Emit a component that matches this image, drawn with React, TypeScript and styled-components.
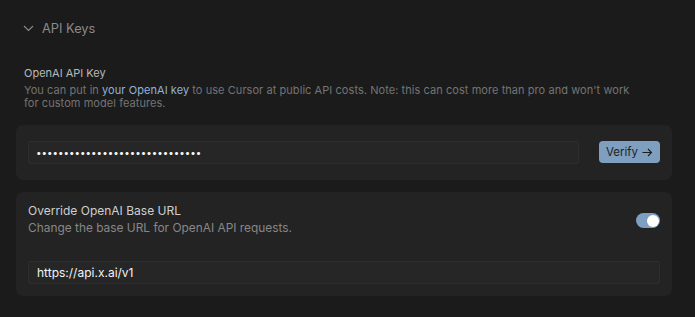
import * as React from 'react';
import styled, {createGlobalStyle} from 'styled-components';

const GlobalStyle = createGlobalStyle`
  html, body {
    margin: 0;
    padding: 0;
    background: #1b1b1b;
  }
  body {
    font-family: Inter, "Noto Sans", sans-serif;
    -webkit-font-smoothing: antialiased;
  }
`;

const Page = styled.main`
  width: 695px;
  height: 317px;
  box-sizing: border-box;
  padding: 20px 23px 0 16px;
  display: flex;
  flex-direction: column;
`;

const SectionHeader = styled.div`
  display: flex;
  align-items: center;
  gap: 8px;
  padding-left: 7px;
  height: 17px;
  color: #8a8a8a;
  font-size: 12.8px;
`;

const Intro = styled.div`
  margin-top: 29px;
  padding: 0 8px;
  display: flex;
  flex-direction: column;
`;

const Label = styled.div`
  color: #b9b9b9;
  font-size: 11px;
  line-height: 14px;
`;

const Hint = styled.p`
  margin: 3.5px 0 0;
  color: #747474;
  font-size: 11px;
  letter-spacing: 0.06px;
  line-height: 13px;
  max-width: 612px;

  & a {
    color: #8fb3da;
    text-decoration: none;
  }
`;

const Card = styled.section<{$mt: number; $pad: string}>`
  margin-top: ${p => p.$mt}px;
  background: #232323;
  border-radius: 7px;
  padding: ${p => p.$pad};
  display: flex;
  flex-direction: column;
`;

const Row = styled.div`
  display: flex;
  align-items: flex-start;
  gap: 20px;
`;

const Field = styled.input`
  flex: 1;
  height: 23px;
  box-sizing: border-box;
  margin: 0;
  padding: 0 8px;
  background: #262626;
  border: 1px solid #2d2d2d;
  border-radius: 2px;
  color: #f4f4f4;
  font-family: Inter, "Noto Sans", sans-serif;
  font-size: 12px;
  outline: none;
`;

const KeyField = styled(Field)`
  font-size: 9.8px;
  padding: 0 7px;
`;

const VerifyButton = styled.button`
  height: 22px;
  width: 61px;
  border: none;
  border-radius: 4px;
  background: #7e9fc0;
  color: #1e1e1e;
  font-family: Inter, "Noto Sans", sans-serif;
  font-size: 11.5px;
  display: flex;
  align-items: center;
  justify-content: center;
  gap: 4px;
  padding: 0;
`;

const SettingHead = styled.div`
  display: flex;
  justify-content: space-between;
  align-items: flex-start;
`;

const Title = styled.div`
  color: #cfcfcf;
  font-size: 12px;
  line-height: 16px;
`;

const Sub = styled.div`
  color: #878787;
  font-size: 11.9px;
  line-height: 16px;
  margin-top: 1px;
`;

const Toggle = styled.div<{$on: boolean}>`
  width: 24px;
  height: 15px;
  margin-top: 10px;
  border-radius: 8px;
  background: ${p => (p.$on ? '#7e9fc0' : '#444')};
  display: flex;
  align-items: center;
  justify-content: ${p => (p.$on ? 'flex-end' : 'flex-start')};
  padding: 0 1px;
  box-sizing: border-box;
  cursor: pointer;

  &::after {
    content: '';
    width: 12px;
    height: 12px;
    border-radius: 50%;
    background: #fff;
  }
`;

const UrlField = styled(Field)`
  margin-top: 25px;
  flex: none;
  width: 100%;
`;

const Chevron = () => (
  <svg width="11" height="7" viewBox="0 0 11 7" fill="none">
    <path d="M1 1l4.5 4.5L10 1" stroke="#8a8a8a" strokeWidth="1.1" />
  </svg>
);

const Arrow = () => (
  <svg width="11" height="9" viewBox="0 0 11 9" fill="none">
    <path d="M0.5 4.5h9M6 1l3.5 3.5L6 8" stroke="#1e1e1e" strokeWidth="1.1" />
  </svg>
);

export default function App() {
  const [key, setKey] = React.useState('sk-xai-1234567890abcdefghijklm');
  const [url, setUrl] = React.useState('https://api.x.ai/v1');
  const [override, setOverride] = React.useState(true);

  return (
    <>
      <GlobalStyle />
      <Page>
        <SectionHeader>
          <Chevron />
          <span>API Keys</span>
        </SectionHeader>

        <Intro>
          <Label>OpenAI API Key</Label>
          <Hint>
            You can put in <a href="#">your OpenAI key</a> to use Cursor at public API costs. Note: this can cost more than pro and won't work for custom model features.
          </Hint>
        </Intro>

        <Card $mt={15.5} $pad="16px 12px">
          <Row>
            <KeyField type="password" value={key} onChange={e => setKey(e.target.value)} />
            <VerifyButton>
              Verify <Arrow />
            </VerifyButton>
          </Row>
        </Card>

        <Card $mt={12} $pad="11px 12px 12px">
          <SettingHead>
            <div>
              <Title>Override OpenAI Base URL</Title>
              <Sub>Change the base URL for OpenAI API requests.</Sub>
            </div>
            <Toggle $on={override} onClick={() => setOverride(!override)} />
          </SettingHead>
          <UrlField value={url} onChange={e => setUrl(e.target.value)} />
        </Card>
      </Page>
    </>
  );
}
